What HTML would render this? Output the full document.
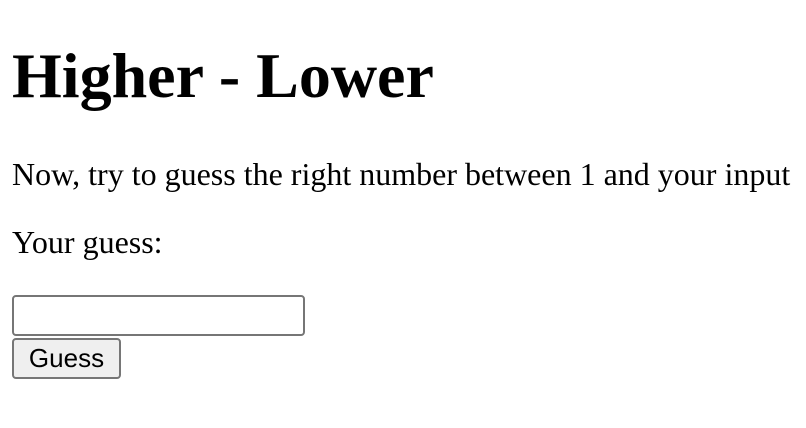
<!DOCTYPE html>
<html><head><style>
body{margin:0;width:806px;height:428px;background:#fff;position:relative;font-family:"Liberation Serif",serif;color:#000}
.t{position:absolute;left:12px;line-height:1;white-space:nowrap;margin:0}
h1.t{font-size:64px;font-weight:bold;top:44px}
.p{font-size:32px}
.inp{position:absolute;left:12px;top:295px;border:2px solid #767676;border-radius:4px;box-sizing:border-box;width:293px;height:41px;background:#fff}
.btn{position:absolute;left:12px;top:338px;width:109px;height:41px;box-sizing:border-box;border:2px solid #767676;border-radius:4px;background:#efefef;font-family:"Liberation Sans",sans-serif;font-size:26px;text-align:center;line-height:37px}
</style></head><body>
<h1 class="t">Higher - Lower</h1>
<div class="t p" style="top:158px">Now, try to guess the right number between 1 and your input</div>
<div class="t p" style="top:226px">Your guess:</div>
<div class="inp"></div>
<div class="btn">Guess</div>
</body></html>
